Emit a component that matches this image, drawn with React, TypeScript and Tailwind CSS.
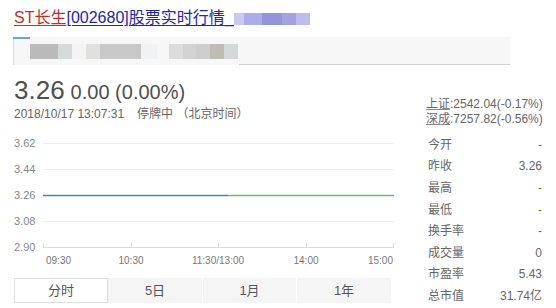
import React from "react";

const FONT = { fontFamily: '"Liberation Sans", Arial, "Noto Sans CJK SC", sans-serif' };

const stats: [string, string, boolean][] = [
  ["今开", "-", true],
  ["昨收", "3.26", false],
  ["最高", "-", true],
  ["最低", "-", true],
  ["换手率", "-", false],
  ["成交量", "0", false],
  ["市盈率", "5.43", false],
  ["总市值", "31.74亿", false],
];

function Chart() {
  const ys = [13, 39, 65, 91, 117];
  const labels = ["3.62", "3.44", "3.26", "3.08", "2.90"];
  const ticks = [29, 117, 204, 292, 379];
  return (
    <svg width={380} height={140} className="block">
      {ys.map((y, i) => (
        <g key={i}>
          <line x1={29} x2={380} y1={y + 0.5} y2={y + 0.5} stroke={i === 4 ? "#dcdcdc" : "#ededed"} strokeWidth={1} />
          <text x={0} y={y + 4} fontSize={11} fill="#888" style={FONT}>
            {labels[i]}
          </text>
        </g>
      ))}
      {ticks.map((x, i) => (
        <line key={i} x1={x + 0.5} x2={x + 0.5} y1={113} y2={117} stroke="#dcdcdc" />
      ))}
      <line x1={29} x2={214} y1={65.5} y2={65.5} stroke="#3d86c6" strokeWidth={1.4} />
      <line x1={214} x2={380} y1={65.5} y2={65.5} stroke="#72b872" strokeWidth={1.4} />
      <g fontSize={10} fill="#777" style={FONT}>
        <text x={32} y={133.5}>09:30</text>
        <text x={117} y={133.5} textAnchor="middle">10:30</text>
        <text x={204} y={133.5} textAnchor="middle">11:30/13:00</text>
        <text x={292} y={133.5} textAnchor="middle">14:00</text>
        <text x={379} y={133.5} textAnchor="end">15:00</text>
      </g>
    </svg>
  );
}

export default function App() {
  return (
    <div className="w-[556px] h-[308px] bg-white overflow-hidden text-[#555]" style={FONT}>
      {/* Title */}
      <div className="pl-[14px] pt-[8px] h-[28px] flex items-center text-[16px] leading-[20px]">
        <span className="text-[#cc2a2a] underline underline-offset-2">ST长生</span>
        <span className="text-[#2424b8] underline underline-offset-2">[002680]股票实时行情_</span>
        <span className="flex h-[12px] mt-[2px]">
          <span className="w-[10px] bg-[#c8c8f0]" />
          <span className="w-[18px] bg-[#acacea]" />
          <span className="w-[20px] bg-[#9494dc]" />
          <span className="w-[14px] bg-[#a2a2e0]" />
          <span className="w-[14px] bg-[#bcbcee]" />
        </span>
      </div>

      {/* Gray bar */}
      <div className="ml-[13px] mt-[9px] w-[497px] h-[28px] bg-[#f7f7f7] border-l border-[#dddddd] relative flex items-center">
        <div className="absolute left-[-1px] top-0 w-[17px] h-[2px] bg-[#6aa4dc]" />
        <div className="absolute left-[225px] right-0 bottom-0 h-px bg-[#d0d0d0]" />
        <div className="flex h-[15px] ml-[16px]">
          <span className="w-[28px] bg-[#bababa]" />
          <span className="w-[14px] bg-[#d6dada]" />
          <span className="w-[14px] bg-[#f4f4f4]" />
          <span className="w-[14px] bg-[#e0e0de]" />
          <span className="w-[41px] bg-[#c8c8c8]" />
          <span className="w-[16px] bg-[#f0f2f4]" />
          <span className="w-[12px] bg-[#f7f7f7]" />
          <span className="w-[14px] bg-[#dcdcdc]" />
          <span className="w-[13px] bg-[#d2d2d2]" />
          <span className="w-[14px] bg-[#cdcdcd]" />
          <span className="w-[14px] bg-[#bfbcb7]" />
          <span className="w-[14px] bg-[#d4d8d8]" />
        </div>
      </div>

      {/* Main */}
      <div className="flex">
        <div className="w-[426px] pl-[14px]">
          <div className="mt-[10px] h-[30px] leading-[30px] flex items-baseline text-[#4f4f4f] whitespace-nowrap">
            <span className="text-[26px]">3.26</span>
            <span className="text-[20px] ml-[6px]">0.00 (0.00%)</span>
          </div>
          <div className="mt-[1px] h-[16px] leading-[16px] text-[12px] text-[#666] whitespace-nowrap">
            2018/10/17 13:07:31<span className="ml-[13px]">停牌中 （北京时间）</span>
          </div>
          <div className="mt-[8px]">
            <Chart />
          </div>
          <div className="mt-[8px] flex w-[377px] h-[25px] text-[13px] text-[#555]">
            <div className="w-[94px] border border-[#dddddd] bg-white flex items-center justify-center">分时</div>
            <div className="w-[95px] bg-[#f5f5f5] flex items-center justify-center border-r border-white">5日</div>
            <div className="w-[94px] bg-[#f5f5f5] flex items-center justify-center border-r border-white">1月</div>
            <div className="w-[94px] bg-[#f5f5f5] flex items-center justify-center">1年</div>
          </div>
        </div>

        <div className="w-[116px] text-[12px] text-[#666]">
          <div className="mt-[32px] leading-[15px] whitespace-nowrap">
            <span className="underline decoration-[#888]">上证</span>:2542.04(-0.17%)
          </div>
          <div className="leading-[15px] whitespace-nowrap">
            <span className="underline decoration-[#888]">深成</span>:7257.82(-0.56%)
          </div>
          <div className="mt-[7px] pl-[2px]">
            {stats.map(([k, v, green]) => (
              <div key={k} className="h-[21.6px] flex items-center justify-between">
                <span className="text-[#666]">{k}</span>
                <span className={green ? "text-[#2aa02a]" : "text-[#666]"}>{v}</span>
              </div>
            ))}
          </div>
        </div>
      </div>
    </div>
  );
}
